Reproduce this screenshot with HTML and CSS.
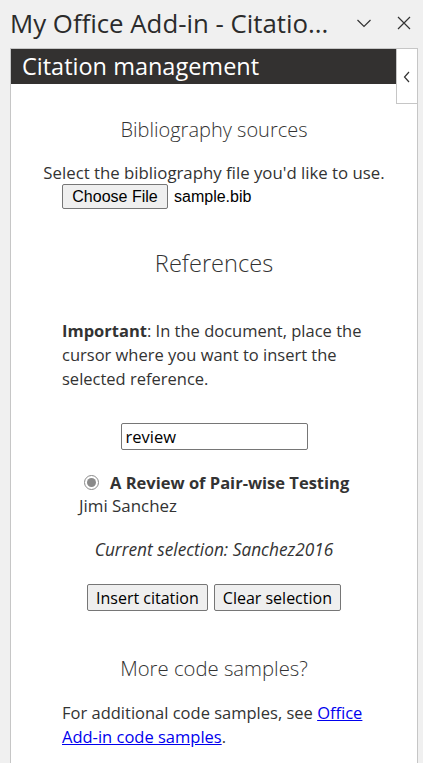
FILE: index.html
```html
<!DOCTYPE html>
<html>
<head>
<meta charset="utf-8">
<link rel="stylesheet" href="styles.css">
</head>
<body>
<div class="titlebar">
  <div class="title">My Office Add-in - Citatio...</div>
  <div class="controls">
    <svg class="ctl" width="16" height="16" viewBox="0 0 16 16"><path d="M1.5 5 L8 11.5 L14.5 5" fill="none" stroke="#333" stroke-width="1.2"/></svg>
    <svg class="ctl" width="16" height="16" viewBox="0 0 16 16"><path d="M2 2 L14 14 M14 2 L2 14" fill="none" stroke="#333" stroke-width="1.2"/></svg>
  </div>
</div>
<div class="panel">
  <div class="header">Citation management</div>
  <div class="tab"><svg width="8" height="12" viewBox="0 0 8 12"><path d="M6 1 L1.5 6 L6 11" fill="none" stroke="#333" stroke-width="1.2"/></svg></div>
  <div class="content">
    <h2 class="h-bib">Bibliography sources</h2>
    <p class="center select">Select the bibliography file you'd like to use.</p>
    <div class="filerow"><button class="filebtn">Choose File</button><span class="filename">sample.bib</span></div>
    <h2 class="h-ref">References</h2>
    <p class="important"><b>Important</b>: In the document, place the cursor where you want to insert the selected reference.</p>
    <div class="searchrow"><input class="search" type="text" value="review"></div>
    <div class="item">
      <label class="itemtitle"><input type="radio" class="radio" checked><b>A Review of Pair-wise Testing</b></label>
      <div class="author">Jimi Sanchez</div>
    </div>
    <p class="current">Current selection: Sanchez2016</p>
    <div class="buttons"><button class="btn">Insert citation</button><button class="btn">Clear selection</button></div>
    <h2 class="h-more">More code samples?</h2>
    <p class="more">For additional code samples, see <a href="#">Office Add-in code samples</a>.</p>
  </div>
</div>
</body>
</html>
```
FILE: styles.css
```css
html, body {
  margin: 0;
  padding: 0;
  height: 100%;
}
body {
  background: #f0f0f0;
  font-family: "Open Sans", "Noto Sans", sans-serif;
  color: #333;
  overflow: hidden;
}
.titlebar {
  height: 48px;
  display: flex;
  align-items: center;
  padding: 0 10px 0 10px;
}
.title {
  flex: 1;
  font-size: 25.8px;
  color: #2b2b2b;
  white-space: nowrap;
  margin-top: -2px;
}
.controls {
  display: flex;
  gap: 24px;
  align-items: center;
  margin-right: 1px;
  margin-top: -2px;
}
.panel {
  position: relative;
  margin-left: 10px;
  width: 406px;
  border: 1px solid #c6c6c6;
  border-bottom: none;
  background: #fff;
  height: calc(100% - 49px);
}
.header {
  width: 375px;
  height: 35px;
  background: #333130;
  color: #fff;
  font-size: 23.5px;
  line-height: 35px;
  padding-left: 11px;
}
.tab {
  position: absolute;
  top: 0;
  right: 0;
  width: 21px;
  height: 55px;
  border-left: 1px solid #c6c6c6;
  border-bottom: 1px solid #c6c6c6;
  background: #fff;
  display: flex;
  align-items: center;
  justify-content: center;
  padding-top: 2px;
  box-sizing: border-box;
}
.content {
  width: 304px;
  margin: 0 0 0 51px;
  font-size: 16.5px;
}
h2 {
  font-weight: 300;
  text-align: center;
  margin: 0;
}
.h-bib {
  font-size: 20px;
  line-height: 28px;
  padding-top: 32px;
}
p { margin: 0; }
.center { text-align: center; }
.select {
  margin-top: 18px;
  line-height: 22px;
  white-space: nowrap;
  margin-left: -30px;
  margin-right: -30px;
  font-size: 16.8px;
}
.filerow {
  display: flex;
  align-items: center;
  height: 25px;
}
.filebtn {
  font-family: "Liberation Sans", Arial, sans-serif;
  font-size: 16px;
  height: 25px;
  width: 106px;
  padding: 0;
  background: #efefef;
  border: 1px solid #767676;
  border-radius: 2px;
  color: #000;
}
.filename {
  font-family: "Liberation Sans", Arial, sans-serif;
  font-size: 16px;
  margin-left: 6px;
  color: #000;
}
.h-ref {
  font-size: 23.6px;
  line-height: 32px;
  margin-top: 38px;
}
.important {
  margin-top: 40px;
  line-height: 24px;
}
.important b { font-weight: 700; }
.searchrow {
  display: flex;
  justify-content: center;
  margin-top: 32px;
}
.search {
  width: 187px;
  height: 27px;
  box-sizing: border-box;
  border: 1px solid #767676;
  border-radius: 2px;
  font-family: "Open Sans", sans-serif;
  font-size: 16.5px;
  padding: 0 4px;
  color: #000;
}
.item {
  margin-top: 21px;
}
.itemtitle {
  display: flex;
  align-items: center;
  line-height: 23px;
  padding-left: 22px;
}
.radio {
  margin: 0 11px 0 0;
  width: 15px;
  height: 15px;
  accent-color: #8a8a8a;
}
.author {
  line-height: 23px;
  padding-left: 17px;
  font-size: 16.9px;
}
.current {
  font-style: italic;
  text-align: center;
  line-height: 22px;
  margin-top: 22px;
  font-size: 17.3px;
}
.buttons {
  display: flex;
  justify-content: center;
  gap: 6px;
  margin-top: 23px;
}
.btn {
  font-family: "Open Sans", sans-serif;
  font-size: 16px;
  height: 27px;
  padding: 0 8px;
  background: #efefef;
  border: 1px solid #767676;
  border-radius: 2px;
  color: #000;
}
.h-more {
  font-size: 20.3px;
  line-height: 28px;
  margin-top: 43px;
}
.more {
  margin-top: 19px;
  line-height: 24px;
}
.more a { color: #0000ee; }
```
